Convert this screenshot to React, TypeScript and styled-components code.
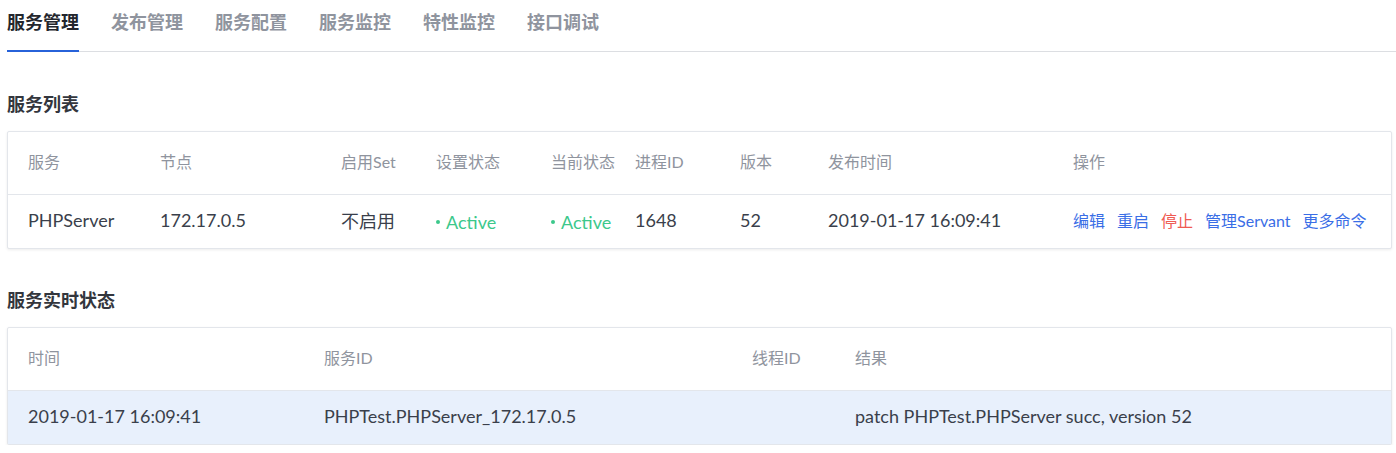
import React from "react";
import styled, { createGlobalStyle } from "styled-components";

const GlobalStyle = createGlobalStyle`
  html, body { margin: 0; padding: 0; background: #ffffff; }
  body { font-family: "Lato", "Noto Sans CJK SC", sans-serif; color: #3a3f4b; }
  * { box-sizing: border-box; }
`;

const Page = styled.div`
  padding: 0 4px 0 7px;
  width: 1396px;
`;

const TabBar = styled.div`
  display: flex;
  gap: 32px;
  height: 52px;
  border-bottom: 1px solid #dcdee2;
  margin-right: -4px;
`;

const Tab = styled.div<{ $active?: boolean }>`
  position: relative;
  height: 51px;
  display: flex;
  align-items: center;
  padding-bottom: 9px;
  font-size: 18px;
  font-weight: 700;
  color: ${(p) => (p.$active ? "#23262d" : "#8f949e")};
  &::after {
    content: "";
    display: ${(p) => (p.$active ? "block" : "none")};
    position: absolute;
    left: 0;
    right: 0;
    bottom: -1px;
    height: 2px;
    background: #2762d9;
  }
`;

const SectionTitle = styled.h2<{ $top: number }>`
  margin: ${(p) => p.$top}px 0 15px 0;
  height: 24px;
  line-height: 24px;
  font-size: 18px;
  font-weight: 700;
  color: #33363d;
`;

const Card = styled.div`
  border: 1px solid #e3e6eb;
  border-radius: 2px;
  box-shadow: 0 1px 3px rgba(0, 0, 0, 0.08);
  background: #fff;
`;

const Row = styled.div<{ $cols: string; $head?: boolean; $highlight?: boolean }>`
  display: grid;
  grid-template-columns: ${(p) => p.$cols};
  align-items: center;
  height: ${(p) => (p.$head ? "63px" : "53px")};
  padding-bottom: 4px;
  border-bottom: ${(p) => (p.$head ? "1px solid #e3e6eb" : "none")};
  background: ${(p) => (p.$highlight ? "#e8f0fc" : "transparent")};
  font-size: ${(p) => (p.$head ? "16px" : "18px")};
  color: ${(p) => (p.$head ? "#8f949e" : "#3a3f4b")};
`;

const Cell = styled.div`
  padding-left: 20px;
  white-space: nowrap;
`;

const Status = styled.span`
  display: inline-flex;
  align-items: center;
  color: #3cc88b;
  &::before {
    content: "";
    width: 4px;
    height: 4px;
    border-radius: 50%;
    background: #3cc88b;
    margin-right: 6px;
  }
`;

const Actions = styled.div`
  display: flex;
  gap: 12px;
  font-size: 16px;
`;

const ActionLink = styled.a<{ $danger?: boolean }>`
  color: ${(p) => (p.$danger ? "#ef5a52" : "#3a6ee6")};
  text-decoration: none;
  cursor: pointer;
`;

const LIST_COLS = "132px 181px 95px 115px 84px 105px 88px 245px 1fr";
const STATE_COLS = "296px 428px 103px 1fr";

const tabs = ["服务管理", "发布管理", "服务配置", "服务监控", "特性监控", "接口调试"];

export default function App() {
  return (
    <Page>
      <GlobalStyle />
      <TabBar>
        {tabs.map((t, i) => (
          <Tab key={t} $active={i === 0}>
            {t}
          </Tab>
        ))}
      </TabBar>

      <SectionTitle $top={40}>服务列表</SectionTitle>
      <Card>
        <Row $cols={LIST_COLS} $head>
          <Cell>服务</Cell>
          <Cell>节点</Cell>
          <Cell>启用Set</Cell>
          <Cell>设置状态</Cell>
          <Cell>当前状态</Cell>
          <Cell>进程ID</Cell>
          <Cell>版本</Cell>
          <Cell>发布时间</Cell>
          <Cell>操作</Cell>
        </Row>
        <Row $cols={LIST_COLS}>
          <Cell>PHPServer</Cell>
          <Cell>172.17.0.5</Cell>
          <Cell>不启用</Cell>
          <Cell>
            <Status>Active</Status>
          </Cell>
          <Cell>
            <Status>Active</Status>
          </Cell>
          <Cell>1648</Cell>
          <Cell>52</Cell>
          <Cell>2019-01-17 16:09:41</Cell>
          <Cell>
            <Actions>
              <ActionLink>编辑</ActionLink>
              <ActionLink>重启</ActionLink>
              <ActionLink $danger>停止</ActionLink>
              <ActionLink>管理Servant</ActionLink>
              <ActionLink>更多命令</ActionLink>
            </Actions>
          </Cell>
        </Row>
      </Card>

      <SectionTitle $top={39}>服务实时状态</SectionTitle>
      <Card>
        <Row $cols={STATE_COLS} $head>
          <Cell>时间</Cell>
          <Cell>服务ID</Cell>
          <Cell>线程ID</Cell>
          <Cell>结果</Cell>
        </Row>
        <Row $cols={STATE_COLS} $highlight>
          <Cell>2019-01-17 16:09:41</Cell>
          <Cell>PHPTest.PHPServer_172.17.0.5</Cell>
          <Cell></Cell>
          <Cell>patch PHPTest.PHPServer succ, version 52</Cell>
        </Row>
      </Card>
    </Page>
  );
}
